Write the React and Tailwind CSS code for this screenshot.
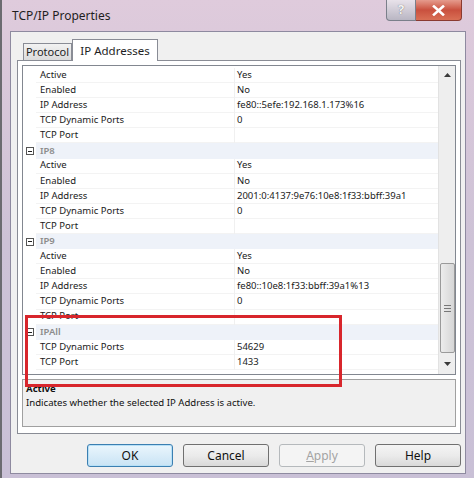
import React from "react";

const rows = [
    { label: "Active", value: "Yes" },
    { label: "Enabled", value: "No" },
    { label: "IP Address", value: "fe80::5efe:192.168.1.173%16" },
    { label: "TCP Dynamic Ports", value: "0" },
    { label: "TCP Port", value: "" },
    { cat: "IP8" },
    { label: "Active", value: "Yes" },
    { label: "Enabled", value: "No" },
    { label: "IP Address", value: "2001:0:4137:9e76:10e8:1f33:bbff:39a1" },
    { label: "TCP Dynamic Ports", value: "0" },
    { label: "TCP Port", value: "" },
    { cat: "IP9" },
    { label: "Active", value: "Yes" },
    { label: "Enabled", value: "No" },
    { label: "IP Address", value: "fe80::10e8:1f33:bbff:39a1%13" },
    { label: "TCP Dynamic Ports", value: "0" },
    { label: "TCP Port", value: "" },
    { cat: "IPAll" },
    { label: "TCP Dynamic Ports", value: "54629" },
    { label: "TCP Port", value: "1433" },
];

const font = { fontFamily: '"Noto Sans", "Open Sans", sans-serif' };

function Row({ row }) {
    if (row.cat) {
        return (
            <div className="flex h-[15.1px] items-center bg-white">
                <div className="w-[13px] h-full flex items-center justify-center">
                    <div className="w-[8px] h-[8px] border border-[#555] flex items-center justify-center bg-white">
                        <div className="w-[4px] h-px bg-[#222]" />
                    </div>
                </div>
                <div className="flex-1 h-full flex items-center bg-[#eef2f9] pl-[4px] text-[9.5px] font-semibold text-[#8c8c8c]">
                    {row.cat}
                </div>
            </div>
        );
    }
    return (
        <div className="flex h-[15.1px] items-stretch">
            <div className="w-[13px]" />
            <div className="w-[198px] flex items-center pl-[4px] text-[9.5px] text-[#1a1a1a] border-b border-[#f3f3f3]">
                {row.label}
            </div>
            <div className="w-px bg-[#f0f0f0]" />
            <div className="flex-1 flex items-center pl-[2px] text-[9.5px] text-[#1a1a1a] border-b border-[#f3f3f3]">
                {row.value}
            </div>
        </div>
    );
}

function Btn({ children, variant }) {
    const base = "w-[86px] h-[23px] rounded-[3px] border flex items-center justify-center text-[12px]";
    if (variant === "default") {
        return (
            <div className={`${base} border-[#3c7fb1] bg-gradient-to-b from-[#eaf6fd] to-[#c9e3f4] text-[#111] shadow-[inset_0_0_0_1px_#b7e0f7]`}>
                {children}
            </div>
        );
    }
    if (variant === "disabled") {
        return (
            <div className={`${base} border-[#b5b9bc] bg-[#f4f4f4] text-[#a3a3a3]`}>{children}</div>
        );
    }
    return (
        <div className={`${base} border-[#707070] bg-gradient-to-b from-[#f4f4f4] via-[#ebebeb] to-[#d9d9d9] text-[#111]`}>
            {children}
        </div>
    );
}

export default function App() {
    return (
        <div
            className="w-[474px] h-[478px] relative overflow-hidden border-l-2 border-[#6b6b70] bg-gradient-to-b from-[#dfcbdc] via-[#cdc2d6] to-[#c9c0d6]"
            style={font}
        >
            {/* title bar */}
            <div className="flex h-[31px]">
                <div className="flex-1 flex items-center pl-[10px] text-[12px] text-[#1e1e1e]">TCP/IP Properties</div>
                <div className="flex mr-[12px] h-[21px]">
                    <div className="w-[30px] h-full border border-[#7a7f8a] border-t-0 rounded-bl-[4px] bg-gradient-to-b from-[#e8e2ea] to-[#b9b6c3] flex items-center justify-center text-[13px] font-bold text-[#f4f4f4] [text-shadow:0_0_1px_#555]">
                        ?
                    </div>
                    <div className="w-[46px] h-full border border-[#8a3a30] border-t-0 border-l-0 rounded-br-[4px] bg-gradient-to-b from-[#e59b8d] via-[#c9503e] to-[#d96f55] flex items-center justify-center">
                        <svg width="13" height="11" viewBox="0 0 13 11">
                            <path d="M2 1.5 L11 9.5 M11 1.5 L2 9.5" stroke="#fff" strokeWidth="2.6" strokeLinecap="square" />
                        </svg>
                    </div>
                </div>
            </div>

            {/* client */}
            <div className="ml-[8px] w-[456px] h-[443px] border border-[#8e8aa0] bg-[#f0f0f0]">
                {/* tabs */}
                <div className="flex items-end h-[28px] pl-[12px]">
                    <div className="w-[49px] h-[17px] border border-[#898c95] border-b-0 bg-gradient-to-b from-[#f2f2f2] to-[#dcdcdc] text-[11px] text-[#1e1e1e] flex items-center justify-center">
                        Protocol
                    </div>
                    <div className="w-[86px] h-[22px] -mb-px relative z-10 border border-[#898c95] border-b-0 bg-white text-[11.5px] text-[#1e1e1e] flex items-center justify-center">
                        IP Addresses
                    </div>
                </div>

                {/* panel */}
                <div className="ml-[6px] w-[444px] h-[374px] border border-[#898c95] bg-white p-[4px] flex flex-col gap-[4px]">
                    <div className="h-[310px] border border-[#828790] flex">
                        <div className="flex-1 overflow-hidden pt-[2px]">
                            {rows.map((r, i) => (
                                <Row key={i} row={r} />
                            ))}
                        </div>
                        <div className="w-[17px] bg-[#eeeeee] border-l border-[#e2e2e2] flex flex-col items-center">
                            <div className="h-[18px] flex items-center justify-center">
                                <svg width="7" height="4" viewBox="0 0 7 4">
                                    <path d="M0 4 L3.5 0 L7 4 Z" fill="#3a3a3a" />
                                </svg>
                            </div>
                            <div className="flex-1" />
                            <div className="w-[15px] h-[90px] rounded-[2px] border border-[#9a9a9a] bg-gradient-to-r from-[#ececec] to-[#d6d6d6] flex flex-col items-center justify-center gap-[2px]">
                                <div className="w-[7px] h-px bg-[#777]" />
                                <div className="w-[7px] h-px bg-[#777]" />
                                <div className="w-[7px] h-px bg-[#777]" />
                            </div>
                            <div className="h-[21px] flex items-center justify-center">
                                <svg width="7" height="4" viewBox="0 0 7 4">
                                    <path d="M0 0 L7 0 L3.5 4 Z" fill="#3a3a3a" />
                                </svg>
                            </div>
                        </div>
                    </div>
                    <div className="h-[48px] border border-[#a0a0a0] bg-[#f0f0f0] px-[3px] pt-[2px] leading-[14px]">
                        <div className="text-[9.6px] font-bold text-[#111]">Active</div>
                        <div className="text-[9.6px] text-[#111]">Indicates whether the selected IP Address is active.</div>
                    </div>
                </div>

                {/* buttons */}
                <div className="ml-[6px] w-[444px] mt-[10px] flex justify-end gap-[10px]">
                    <Btn variant="default">OK</Btn>
                    <Btn>Cancel</Btn>
                    <Btn variant="disabled">
                        <span><span className="underline">A</span>pply</span>
                    </Btn>
                    <Btn>Help</Btn>
                </div>
            </div>

            {/* highlight box */}
            <div className="absolute left-[23px] top-[315px] w-[317px] h-[72px] border-[3px] border-[#d8262c]" />
        </div>
    );
}
